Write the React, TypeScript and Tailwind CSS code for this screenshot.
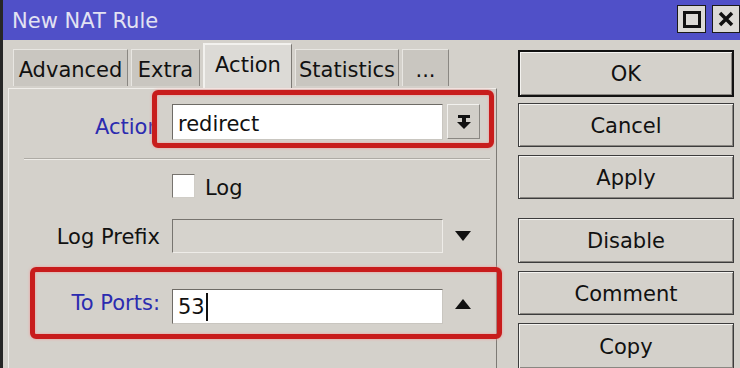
import React from 'react';

const labelBlue = 'text-[#2b2bb0]';

const SideButton = ({ label, className = '', isDefault = false }: { label: string; className?: string; isDefault?: boolean }) => (
  <div
    className={`w-[216px] flex items-center justify-center pt-[3px] bg-[#d4d1cb] text-[21px] text-[#111] ${
      isDefault ? 'border-2 border-[#111] shadow-[inset_1px_1px_0_#f4f3f0,inset_-1px_-1px_0_#8a8782]' : 'border border-[#3c3c3c] shadow-[inset_1px_1px_0_#f4f3f0,inset_-1px_-1px_0_#8a8782]'
    } ${className}`}
  >
    {label}
  </div>
);

const Tab = ({ label, width, active = false }: { label: string; width: string; active?: boolean }) => (
  <div
    className={`${width} flex items-center justify-center text-[21px] text-[#111] ${
      active
        ? 'h-[45px] bg-[#dcdad6] border-t-2 border-l-2 border-[#f2f1ee] border-r border-r-[#7d7a75] pb-[1px]'
        : 'h-[37px] mb-[2px] pt-[5px] bg-[#c9c6c0] border-t border-l border-[#e8e6e2] border-r border-r-[#8a8782]'
    }`}
  >
    {label}
  </div>
);

export default function App() {
  return (
    <div className="w-[740px] h-[368px] overflow-hidden flex flex-col bg-[#d4d1cb] border-l-[3px] border-[#262626] font-['DejaVu_Sans',sans-serif]">
      {/* title bar */}
      <div className="h-[40px] flex items-center bg-[#5050c8] pl-[9px]">
        <span className="text-[21px] text-[#e2e2f2] flex-1 pt-[3px]">New NAT Rule</span>
        <div className="flex items-start h-[40px] pt-[5px]">
          <div className="w-[29px] h-[28px] bg-[#dcdad6] border border-[#1a1a1a] flex items-center justify-center">
            <div className="w-[18px] h-[17px] border-[3px] border-[#111] bg-[#dcdad6]" />
          </div>
          <div className="w-[28px] h-[28px] ml-[6px] bg-[#dcdad6] border border-[#1a1a1a] flex items-center justify-center">
            <svg width="16" height="16" viewBox="0 0 16 16">
              <path d="M2 2 L14 14 M14 2 L2 14" stroke="#111" strokeWidth="3.5" />
            </svg>
          </div>
        </div>
      </div>

      <div className="flex flex-1">
        {/* left: tabs + panel */}
        <div className="w-[494px] flex flex-col">
          <div className="h-[48px] flex items-end pl-[10px] gap-[3px]">
            <Tab label="Advanced" width="w-[115px]" />
            <Tab label="Extra" width="w-[69px]" />
            <Tab label="Action" width="w-[89px]" active />
            <Tab label="Statistics" width="w-[104px]" />
            <Tab label="..." width="w-[47px]" />
          </div>

          <div className="ml-[5px] w-[489px] flex-1 flex flex-col border-t border-l border-[#f0eeea] border-r border-r-[#7d7a75] bg-[#d4d1cb]">
            {/* Action row */}
            <div className="flex h-[58px] mt-[1px]">
              <div className="w-[143px] overflow-hidden whitespace-nowrap pl-[86px] pt-[22px]">
                <span className={`text-[21px] ${labelBlue}`}>Action</span>
              </div>
              <div className="w-[342px] h-[58px] border-[5px] border-[#c81c1c] rounded-[6px] shadow-[0_0_3px_#f39a9a,inset_0_0_3px_#f39a9a] flex items-start pl-[15px] pt-[9px]">
                <div className="w-[271px] h-[36px] bg-white border border-[#6e6b66] border-b-[#c9c6c0] border-r-[#c9c6c0] flex items-center pl-[5px] pt-[5px] text-[21px] text-[#111]">
                  redirect
                </div>
                <div className="ml-[4px] w-[33px] h-[35px] bg-[#d1cec8] border border-[#8a8782] border-t-[#f2f1ee] border-l-[#f2f1ee] flex items-center justify-center">
                  <svg width="14" height="16" viewBox="0 0 14 16">
                    <rect x="1" y="1" width="12" height="3" fill="#111" />
                    <rect x="5" y="4" width="4" height="5" fill="#111" />
                    <polygon points="0,8 14,8 7,15" fill="#111" />
                  </svg>
                </div>
              </div>
            </div>

            {/* separator */}
            <div className="ml-[15px] mt-[10px] w-[466px] h-[2px] border-t border-[#aeaba5] border-b border-b-[#eeece8]" />

            {/* Log checkbox */}
            <div className="flex items-center h-[24px] mt-[14px] pl-[163px]">
              <div className="w-[23px] h-[24px] bg-white border border-[#77746f] border-b-[#d0cdc7] border-r-[#d0cdc7]" />
              <span className="ml-[10px] text-[21px] text-[#111] pt-[5px]">Log</span>
            </div>

            {/* Log Prefix */}
            <div className="flex items-center h-[34px] mt-[21px]">
              <div className="w-[151px] text-right text-[21px] text-[#111] whitespace-nowrap pt-[4px]">Log Prefix</div>
              <div className="ml-[12px] w-[271px] h-[34px] bg-[#d6d3cd] border border-[#77746f] border-b-[#eeece8] border-r-[#eeece8]" />
              <svg className="ml-[12px]" width="16" height="11" viewBox="0 0 16 11">
                <polygon points="0,0 16,0 8,10" fill="#111" />
              </svg>
            </div>

            {/* To Ports */}
            <div className="ml-[21px] mt-[14px] w-[472px] h-[72px] border-[5px] border-[#c81c1c] rounded-[6px] shadow-[0_0_3px_#f39a9a,inset_0_0_3px_#f39a9a] flex items-start pt-[17px] relative z-10">
              <div className={`w-[125px] text-right text-[21px] ${labelBlue} whitespace-nowrap mt-[-1px]`}>To Ports:</div>
              <div className="ml-[12px] w-[271px] h-[35px] bg-white border border-[#6e6b66] border-b-[#c9c6c0] border-r-[#c9c6c0] flex items-center pl-[5px] pt-[2px] text-[21px] text-[#111]">
                53<span className="inline-block w-[2px] h-[28px] bg-[#111] ml-[1px] mb-[2px]" />
              </div>
              <svg className="ml-[12px] mt-[10px]" width="16" height="11" viewBox="0 0 16 11">
                <polygon points="8,0 16,10 0,10" fill="#111" />
              </svg>
            </div>
          </div>
        </div>

        {/* right: buttons */}
        <div className="ml-[21px] flex flex-col">
          <SideButton label="OK" isDefault className="mt-[10px] h-[47px]" />
          <SideButton label="Cancel" className="mt-[6px] h-[44px]" />
          <SideButton label="Apply" className="mt-[8px] h-[44px]" />
          <SideButton label="Disable" className="mt-[19px] h-[45px]" />
          <SideButton label="Comment" className="mt-[8px] h-[44px]" />
          <SideButton label="Copy" className="mt-[8px] h-[46px]" />
        </div>
      </div>
    </div>
  );
}
